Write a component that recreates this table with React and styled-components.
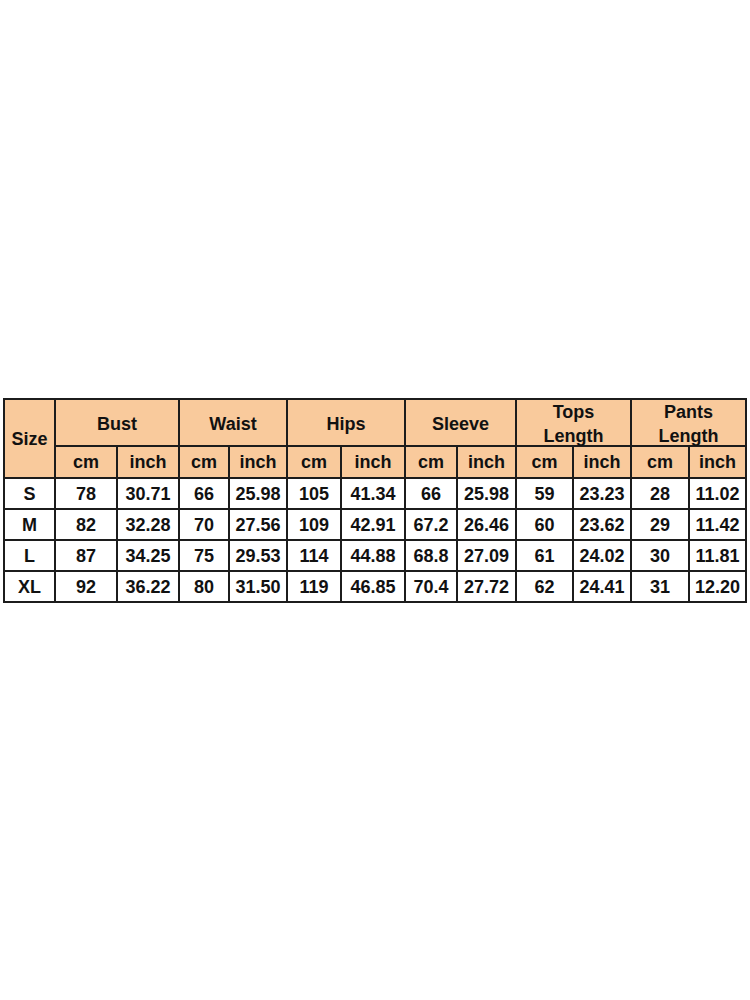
import styled, { createGlobalStyle } from "styled-components";

const GlobalStyle = createGlobalStyle`
  body {
    margin: 0;
    background: #ffffff;
    font-family: "Liberation Sans", Arial, sans-serif;
  }
`;

const Page = styled.div`
  height: 1000px;
  display: flex;
  align-items: center;
  justify-content: center;
  padding-top: 1px;
  box-sizing: border-box;
`;

const Table = styled.table`
  border-collapse: collapse;
  table-layout: fixed;
  width: 744px;
  color: #111;
  font-size: 18px;
  font-weight: bold;
`;

const Row = styled.tr`
  height: ${(props) => props.h}px;
`;

const Cell = styled.td`
  border: 2px solid #1c1c1c;
  padding: 0;
  text-align: center;
  vertical-align: middle;
  line-height: 24px;
  background: ${(props) => (props.head ? "#f9ca9c" : "#ffffff")};
`;

const Lines = styled.div`
  line-height: 24px;
  margin: -1px 0 -4px;
`;

const widths = [51, 62, 62, 50, 58, 54, 64, 52, 59, 57, 58, 58, 57];

const groups = [
  ["Bust"],
  ["Waist"],
  ["Hips"],
  ["Sleeve"],
  ["Tops", "Length"],
  ["Pants", "Length"],
];

const rows = [
  ["S", "78", "30.71", "66", "25.98", "105", "41.34", "66", "25.98", "59", "23.23", "28", "11.02"],
  ["M", "82", "32.28", "70", "27.56", "109", "42.91", "67.2", "26.46", "60", "23.62", "29", "11.42"],
  ["L", "87", "34.25", "75", "29.53", "114", "44.88", "68.8", "27.09", "61", "24.02", "30", "11.81"],
  ["XL", "92", "36.22", "80", "31.50", "119", "46.85", "70.4", "27.72", "62", "24.41", "31", "12.20"],
];

export default function App() {
  return (
    <Page>
      <GlobalStyle />
      <Table>
        <colgroup>
          {widths.map((w, i) => (
            <col key={i} style={{ width: w }} />
          ))}
        </colgroup>
        <tbody>
          <Row h={47}>
            <Cell head rowSpan={2}>Size</Cell>
            {groups.map((g) => (
              <Cell head colSpan={2} key={g[0]}>
                <Lines>
                  {g.map((line, i) => (
                    <div key={i}>{line}</div>
                  ))}
                </Lines>
              </Cell>
            ))}
          </Row>
          <Row h={32}>
            {groups.map((g) => [
              <Cell head key={g[0] + "cm"}>cm</Cell>,
              <Cell head key={g[0] + "in"}>inch</Cell>,
            ])}
          </Row>
          {rows.map((r) => (
            <Row h={31} key={r[0]}>
              {r.map((v, i) => (
                <Cell key={i}>{v}</Cell>
              ))}
            </Row>
          ))}
        </tbody>
      </Table>
    </Page>
  );
}
